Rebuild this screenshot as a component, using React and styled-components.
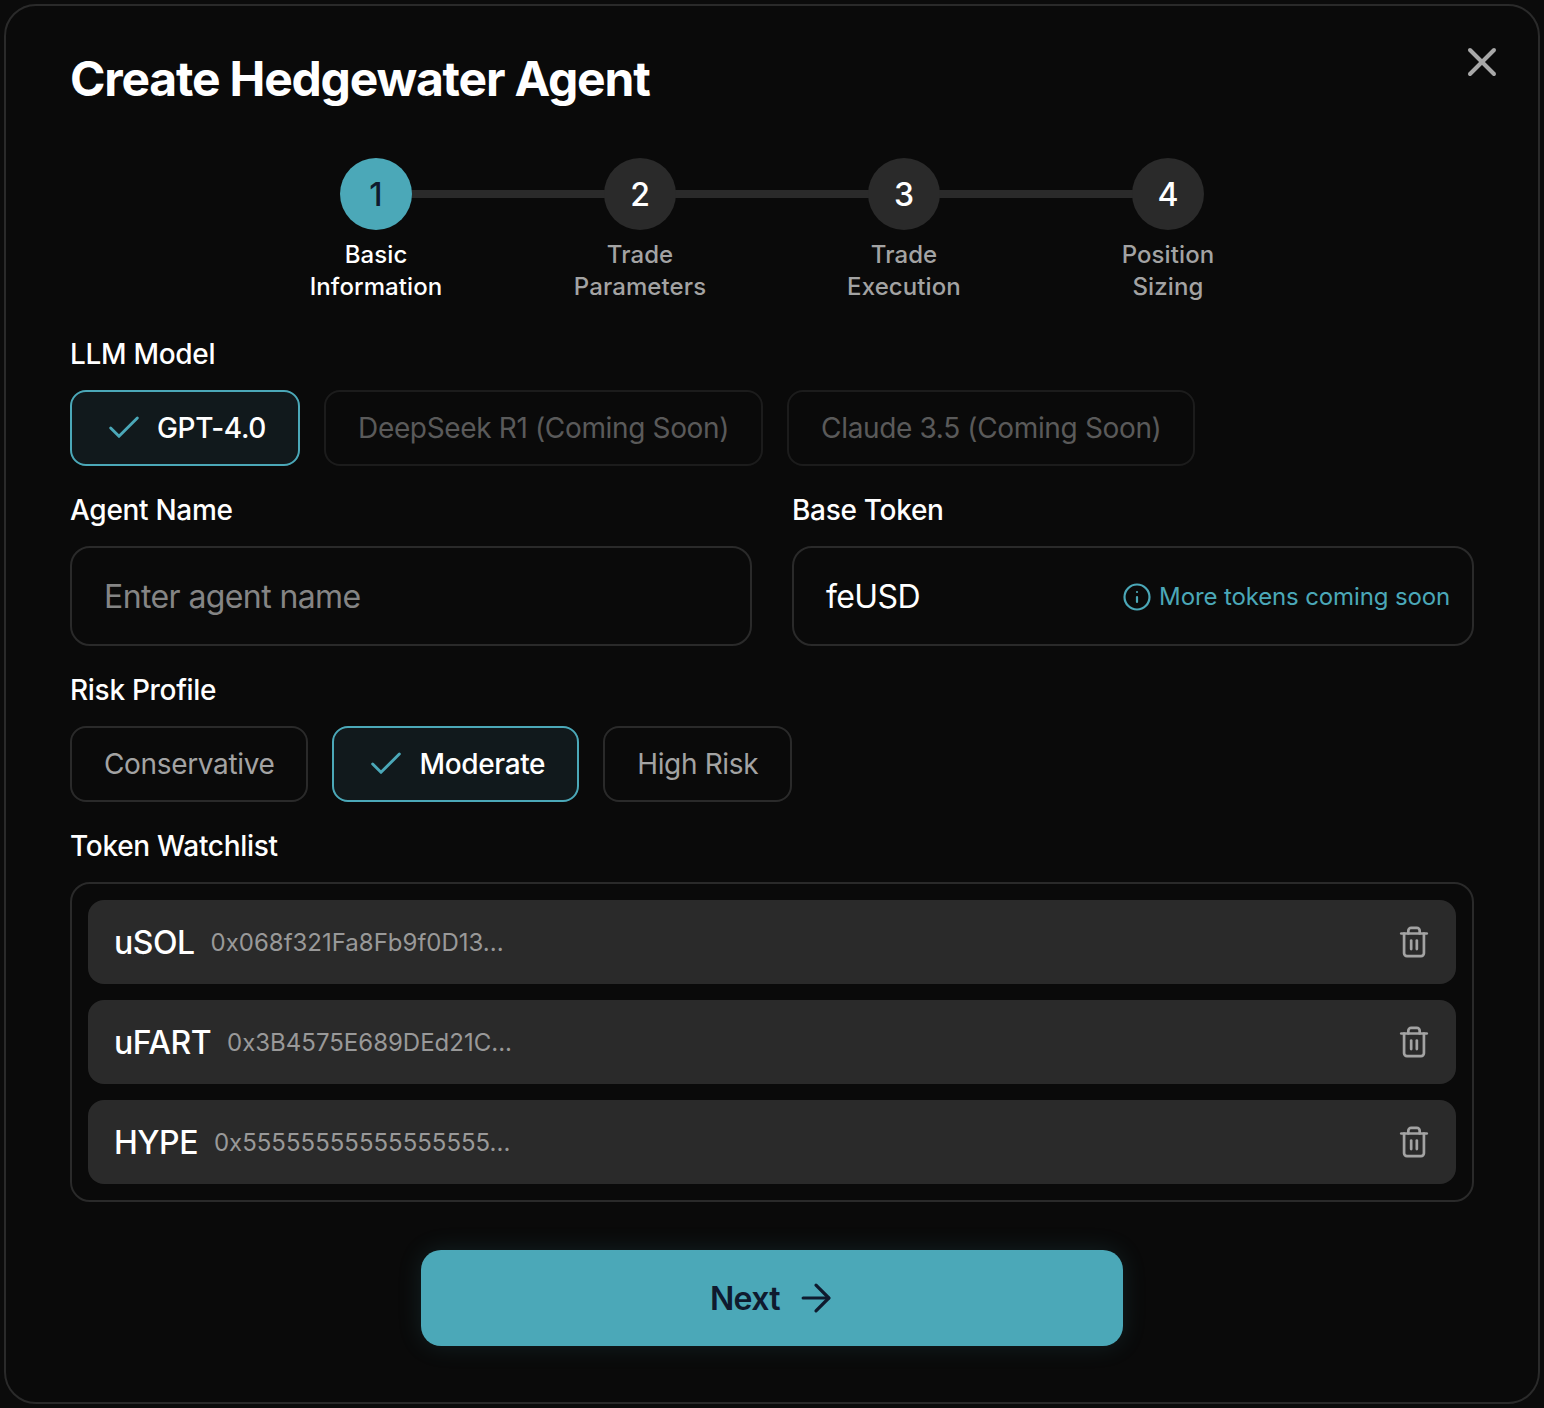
import styled, { createGlobalStyle } from 'styled-components';
import { ArrowRight, Check, Info, Trash2, X } from 'lucide-react';

const STEPS = [
  { n: 1, title: 'Basic', sub: 'Information', active: true },
  { n: 2, title: 'Trade', sub: 'Parameters' },
  { n: 3, title: 'Trade', sub: 'Execution' },
  { n: 4, title: 'Position', sub: 'Sizing' },
];

const MODELS = [
  { name: 'GPT-4.0', selected: true },
  { name: 'DeepSeek R1 (Coming Soon)', disabled: true },
  { name: 'Claude 3.5 (Coming Soon)', disabled: true },
];

const RISKS = [
  { name: 'Conservative' },
  { name: 'Moderate', selected: true },
  { name: 'High Risk' },
];

const TOKENS = [
  { symbol: 'uSOL', address: '0x068f321Fa8Fb9f0D13...' },
  { symbol: 'uFART', address: '0x3B4575E689DEd21C...' },
  { symbol: 'HYPE', address: '0x55555555555555555...' },
];

function ChoiceButton({ item }) {
  return (
    <Choice type='button' $selected={item.selected} $disabled={item.disabled}>
      {item.selected && <Check size={40} strokeWidth={1.75} color='#4ba8b8' />}
      {item.name}
    </Choice>
  );
}

function App() {
  return (
    <Page>
      <GlobalStyle />
      <Modal>
        <Close type='button' aria-label='Close'>
          <X size={48} strokeWidth={2} />
        </Close>
        <Title>Create Hedgewater Agent</Title>

        <Stepper>
          {STEPS.map((step) => (
            <Step key={step.n}>
              <StepCircle $active={step.active}>{step.n}</StepCircle>
              <StepLabel $active={step.active}>
                {step.title}
                <br />
                {step.sub}
              </StepLabel>
            </Step>
          ))}
        </Stepper>

        <Fields>
          <Field>
            <Label>LLM Model</Label>
            <Choices>
              {MODELS.map((m) => (
                <ChoiceButton key={m.name} item={m} />
              ))}
            </Choices>
          </Field>

          <TwoCols>
            <Field>
              <Label>Agent Name</Label>
              <Input type='text' placeholder='Enter agent name' />
            </Field>
            <Field>
              <Label>Base Token</Label>
              <TokenBox>
                feUSD
                <Hint>
                  <Info size={30} strokeWidth={1.75} />
                  More tokens coming soon
                </Hint>
              </TokenBox>
            </Field>
          </TwoCols>

          <Field>
            <Label>Risk Profile</Label>
            <Choices>
              {RISKS.map((r) => (
                <ChoiceButton key={r.name} item={r} />
              ))}
            </Choices>
          </Field>

          <Field>
            <Label>Token Watchlist</Label>
            <Watchlist>
              {TOKENS.map((t) => (
                <TokenRow key={t.symbol}>
                  <Symbol>{t.symbol}</Symbol>
                  <Address>{t.address}</Address>
                  <Trash type='button' aria-label={`Remove ${t.symbol}`}>
                    <Trash2 size={34} strokeWidth={1.9} />
                  </Trash>
                </TokenRow>
              ))}
            </Watchlist>
          </Field>
        </Fields>

        <Next type='button'>
          Next
          <ArrowRight size={44} strokeWidth={1.75} />
        </Next>
      </Modal>
    </Page>
  );
}

// -------------------------------------------------- styling ----------------------------------------------
const GlobalStyle = createGlobalStyle`
  * {
    box-sizing: border-box;
  }

  html,
  body {
    margin: 0;
    background-color: #0b0b0b;
    overflow: hidden;
  }

  body,
  button,
  input {
    font-family: Inter, 'Liberation Sans', sans-serif;
  }
`;

const Page = styled.div`
  padding: 4px;
`;

const Modal = styled.div`
  position: relative;
  width: 1536px;
  padding: 48px 64px 56px;
  border: 2px solid #2a2a2a;
  border-radius: 32px;
  background-color: #0a0a0a;
  display: flex;
  flex-direction: column;
`;

const Close = styled.button`
  position: absolute;
  top: 32px;
  right: 32px;
  display: flex;
  padding: 0;
  border: 0;
  background: none;
  color: #a8a8a8;
  cursor: pointer;
`;

const Title = styled.h1`
  margin: 0 0 54px;
  font-size: 48px;
  line-height: 50px;
  font-weight: 700;
  letter-spacing: -0.025em;
  color: #fff;
`;

const Stepper = styled.div`
  display: grid;
  grid-template-columns: repeat(4, 264px);
  justify-content: center;
  margin-bottom: 31px;
`;

const Step = styled.div`
  position: relative;
  display: flex;
  flex-direction: column;
  align-items: center;

  &:not(:last-child)::after {
    content: '';
    position: absolute;
    top: 32px;
    left: 50%;
    width: 100%;
    height: 8px;
    background-color: #2a2a2a;
  }
`;

const StepCircle = styled.div`
  position: relative;
  z-index: 1;
  width: 72px;
  height: 72px;
  padding-top: 1px;
  border-radius: 50%;
  display: flex;
  align-items: center;
  justify-content: center;
  font-size: 32px;
  font-weight: 500;
  background-color: ${(p) => (p.$active ? '#4ba8b8' : '#2a2a2a')};
  color: ${(p) => (p.$active ? '#0f1a2e' : '#fff')};
`;

const StepLabel = styled.div`
  margin-top: 9px;
  font-size: 24px;
  line-height: 32px;
  font-weight: 500;
  letter-spacing: 0.1px;
  text-align: center;
  color: ${(p) => (p.$active ? '#fff' : '#a3a3a3')};
`;

const Fields = styled.div`
  display: flex;
  flex-direction: column;
  gap: 24px;
`;

const Field = styled.div`
  display: flex;
  flex-direction: column;
  gap: 16px;
  min-width: 0;
`;

const TwoCols = styled.div`
  display: grid;
  grid-template-columns: 1fr 1fr;
  gap: 40px;
`;

const Label = styled.div`
  font-size: 28px;
  line-height: 40px;
  font-weight: 500;
  letter-spacing: -0.3px;
  color: #fff;
`;

const Choices = styled.div`
  display: flex;
  gap: 24px;
`;

const Choice = styled.button`
  height: 76px;
  padding: 0 32px;
  border-radius: 16px;
  display: flex;
  align-items: center;
  gap: 13px;
  font-size: 28px;
  letter-spacing: -0.35px;
  font-weight: ${(p) => (p.$selected ? 500 : 400)};
  border: 2px solid
    ${(p) => (p.$selected ? '#4ba8b8' : p.$disabled ? '#1c1c1c' : '#2a2a2a')};
  background-color: ${(p) => (p.$selected ? '#11191c' : 'transparent')};
  color: ${(p) => (p.$selected ? '#fff' : p.$disabled ? '#5a5a5a' : '#a3a3a3')};
  cursor: ${(p) => (p.$disabled ? 'not-allowed' : 'pointer')};
`;

const Input = styled.input`
  width: 100%;
  height: 100px;
  padding: 1px 32px 0;
  border: 2px solid #2a2a2a;
  border-radius: 20px;
  outline: 0;
  background: transparent;
  font-size: 32px;
  letter-spacing: -0.6px;
  color: #fff;

  &::placeholder {
    color: #858585;
  }
`;

const TokenBox = styled.div`
  height: 100px;
  padding: 1px 22px 0 32px;
  border: 2px solid #2a2a2a;
  border-radius: 20px;
  display: flex;
  align-items: center;
  justify-content: space-between;
  font-size: 32px;
  letter-spacing: -0.6px;
  color: #fff;
`;

const Hint = styled.div`
  display: flex;
  align-items: center;
  gap: 7px;
  font-size: 24px;
  letter-spacing: -0.13px;
  color: #4ba8b8;
`;

const Watchlist = styled.div`
  padding: 16px;
  border: 2px solid #2a2a2a;
  border-radius: 20px;
  display: flex;
  flex-direction: column;
  gap: 16px;
`;

const TokenRow = styled.div`
  height: 84px;
  padding: 0 25px 0 26px;
  border-radius: 16px;
  background-color: #2a2a2a;
  display: flex;
  align-items: center;
  gap: 16px;
`;

const Symbol = styled.span`
  font-size: 32px;
  font-weight: 500;
  letter-spacing: -0.5px;
  color: #fff;
`;

const Address = styled.span`
  flex: 1;
  font-size: 24px;
  color: #999;
`;

const Trash = styled.button`
  display: flex;
  padding: 0;
  border: 0;
  background: none;
  color: #a3a3a3;
  cursor: pointer;
`;

const Next = styled.button`
  align-self: center;
  width: 702px;
  height: 96px;
  margin-top: 48px;
  padding: 0 0 0 4px;
  border: 0;
  border-radius: 20px;
  background-color: #4ba8b8;
  box-shadow: 0 0 24px rgba(75, 168, 184, 0.15);
  display: flex;
  align-items: center;
  justify-content: center;
  gap: 14px;
  font-size: 32px;
  font-weight: 600;
  letter-spacing: -0.6px;
  color: #0f1a2e;
  cursor: pointer;
`;

export default App;
